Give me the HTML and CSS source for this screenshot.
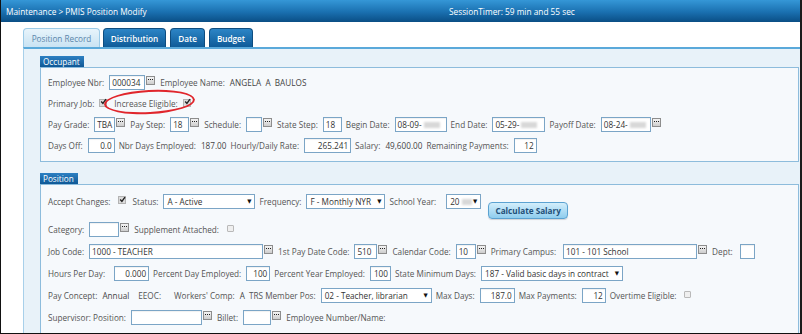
FILE: index.html
```html
<!DOCTYPE html>
<html>
<head>
<meta charset="utf-8">
<link rel="stylesheet" href="styles.css">
</head>
<body>
<div class="frame">
  <header class="topbar">
    <span class="crumb">Maintenance &gt; PMIS Position Modify</span>
    <span class="timer">SessionTimer: 59 min and 55 sec</span>
  </header>
  <nav class="tabs">
    <span class="tab active t1">Position Record</span>
    <span class="tab t2">Distribution</span>
    <span class="tab t3">Date</span>
    <span class="tab t4">Budget</span>
  </nav>
  <main class="panel">
    <section class="group">
      <div class="group-title">Occupant</div>
      <div class="group-box occ">
        <div class="row">
          <span class="lbl">Employee Nbr:</span>
          <span class="field"><span class="inp w36">000034</span><span class="dots"><svg width="7" height="7" viewBox="0 0 7 7"><rect x="1" y="2" width="1" height="1" fill="#222"/><rect x="3" y="2" width="1" height="1" fill="#222"/><rect x="5" y="2" width="1" height="1" fill="#222"/></svg></span></span>
          <span class="lbl">Employee Name:</span>
          <span class="val">ANGELA&nbsp; A&nbsp; BAULOS</span>
        </div>
        <div class="row ring-row">
          <span class="lbl">Primary Job:</span>
          <span class="chk on"><svg width="7" height="7" viewBox="0 0 7 7"><path d="M1.2 3.6 L2.9 5.4 L6 1.2" fill="none" stroke="#222" stroke-width="1.4"/></svg></span>
          <span class="lbl ml3">Increase Eligible:</span>
          <span class="chk on"><svg width="7" height="7" viewBox="0 0 7 7"><path d="M1.2 3.6 L2.9 5.4 L6 1.2" fill="none" stroke="#222" stroke-width="1.4"/></svg></span>
          <span class="ring"></span>
        </div>
        <div class="row">
          <span class="lbl">Pay Grade:</span>
          <span class="field"><span class="inp w21">TBA</span><span class="dots"><svg width="7" height="7" viewBox="0 0 7 7"><rect x="1" y="2" width="1" height="1" fill="#222"/><rect x="3" y="2" width="1" height="1" fill="#222"/><rect x="5" y="2" width="1" height="1" fill="#222"/></svg></span></span>
          <span class="lbl">Pay Step:</span>
          <span class="field"><span class="inp w19">18</span><span class="dots"><svg width="7" height="7" viewBox="0 0 7 7"><rect x="1" y="2" width="1" height="1" fill="#222"/><rect x="3" y="2" width="1" height="1" fill="#222"/><rect x="5" y="2" width="1" height="1" fill="#222"/></svg></span></span>
          <span class="lbl">Schedule:</span>
          <span class="field"><span class="inp w16"></span><span class="dots"><svg width="7" height="7" viewBox="0 0 7 7"><rect x="1" y="2" width="1" height="1" fill="#222"/><rect x="3" y="2" width="1" height="1" fill="#222"/><rect x="5" y="2" width="1" height="1" fill="#222"/></svg></span></span>
          <span class="lbl">State Step:</span>
          <span class="inp w19">18</span>
          <span class="lbl">Begin Date:</span>
          <span class="inp w52">08-09-<span class="blur"></span></span>
          <span class="lbl">End Date:</span>
          <span class="inp w53">05-29-<span class="blur"></span></span>
          <span class="lbl">Payoff Date:</span>
          <span class="field"><span class="inp w50">08-24-<span class="blur"></span></span><span class="dots"><svg width="7" height="7" viewBox="0 0 7 7"><rect x="1" y="2" width="1" height="1" fill="#222"/><rect x="3" y="2" width="1" height="1" fill="#222"/><rect x="5" y="2" width="1" height="1" fill="#222"/></svg></span></span>
        </div>
        <div class="row">
          <span class="lbl">Days Off:</span>
          <span class="inp w27 num">0.0</span>
          <span class="lbl">Nbr Days Employed:</span>
          <span class="val">187.00</span>
          <span class="lbl">Hourly/Daily Rate:</span>
          <span class="inp w47 num">265.241</span>
          <span class="lbl">Salary:</span>
          <span class="val">49,600.00</span>
          <span class="lbl">Remaining Payments:</span>
          <span class="inp w23 num">12</span>
        </div>
      </div>
    </section>

    <section class="group pos-group">
      <div class="group-title">Position</div>
      <div class="group-box pos">
        <div class="row">
          <span class="lbl">Accept Changes:</span>
          <span class="chk on ml2"><svg width="7" height="7" viewBox="0 0 7 7"><path d="M1.2 3.6 L2.9 5.4 L6 1.2" fill="none" stroke="#222" stroke-width="1.4"/></svg></span>
          <span class="lbl ml3">Status:</span>
          <span class="sel w92"><span>A - Active</span><span class="arr">▼</span></span>
          <span class="lbl">Frequency:</span>
          <span class="sel w79"><span>F - Monthly NYR</span><span class="arr">▼</span></span>
          <span class="lbl">School Year:</span>
          <span class="sel w35 ml5"><span>20<span class="blur short"></span></span><span class="arr">▼</span></span>
          <span class="calc">Calculate Salary</span>
        </div>
        <div class="row r2">
          <span class="lbl">Category:</span>
          <span class="field"><span class="inp w30"></span><span class="dots"><svg width="7" height="7" viewBox="0 0 7 7"><rect x="1" y="2" width="1" height="1" fill="#222"/><rect x="3" y="2" width="1" height="1" fill="#222"/><rect x="5" y="2" width="1" height="1" fill="#222"/></svg></span></span>
          <span class="lbl">Supplement Attached:</span>
          <span class="chk off ml3"></span>
        </div>
        <div class="row">
          <span class="lbl">Job Code:</span>
          <span class="field"><span class="inp w174">1000 - TEACHER</span><span class="dots"><svg width="7" height="7" viewBox="0 0 7 7"><rect x="1" y="2" width="1" height="1" fill="#222"/><rect x="3" y="2" width="1" height="1" fill="#222"/><rect x="5" y="2" width="1" height="1" fill="#222"/></svg></span></span>
          <span class="lbl">1st Pay Date Code:</span>
          <span class="field"><span class="inp w23">510</span><span class="dots"><svg width="7" height="7" viewBox="0 0 7 7"><rect x="1" y="2" width="1" height="1" fill="#222"/><rect x="3" y="2" width="1" height="1" fill="#222"/><rect x="5" y="2" width="1" height="1" fill="#222"/></svg></span></span>
          <span class="lbl">Calendar Code:</span>
          <span class="field"><span class="inp w20">10</span><span class="dots"><svg width="7" height="7" viewBox="0 0 7 7"><rect x="1" y="2" width="1" height="1" fill="#222"/><rect x="3" y="2" width="1" height="1" fill="#222"/><rect x="5" y="2" width="1" height="1" fill="#222"/></svg></span></span>
          <span class="lbl">Primary Campus:</span>
          <span class="field ml2"><span class="inp w134">101 - 101 School</span><span class="dots"><svg width="7" height="7" viewBox="0 0 7 7"><rect x="1" y="2" width="1" height="1" fill="#222"/><rect x="3" y="2" width="1" height="1" fill="#222"/><rect x="5" y="2" width="1" height="1" fill="#222"/></svg></span></span>
          <span class="lbl">Dept:</span>
          <span class="inp w15 ml2"></span>
        </div>
        <div class="row">
          <span class="lbl">Hours Per Day:</span>
          <span class="inp w35 num ml4">0.000</span>
          <span class="lbl">Percent Day Employed:</span>
          <span class="inp w24 num">100</span>
          <span class="lbl">Percent Year Employed:</span>
          <span class="inp w21 num">100</span>
          <span class="lbl">State Minimum Days:</span>
          <span class="sel w142"><span>187 - Valid basic days in contract</span><span class="arr">▼</span></span>
        </div>
        <div class="row">
          <span class="lbl">Pay Concept:</span>
          <span class="val">Annual</span>
          <span class="lbl ml5">EEOC:</span>
          <span class="lbl ml8">Workers' Comp:</span>
          <span class="val">A</span>
          <span class="lbl">TRS Member Pos:</span>
          <span class="sel w111"><span>02 - Teacher, librarian</span><span class="arr">▼</span></span>
          <span class="lbl">Max Days:</span>
          <span class="inp w35 num">187.0</span>
          <span class="lbl">Max Payments:</span>
          <span class="inp w24 num">12</span>
          <span class="lbl">Overtime Eligible:</span>
          <span class="chk off ml3"></span>
        </div>
        <div class="row">
          <span class="lbl">Supervisor: Position:</span>
          <span class="field"><span class="inp w71"></span><span class="dots"><svg width="7" height="7" viewBox="0 0 7 7"><rect x="1" y="2" width="1" height="1" fill="#222"/><rect x="3" y="2" width="1" height="1" fill="#222"/><rect x="5" y="2" width="1" height="1" fill="#222"/></svg></span></span>
          <span class="lbl">Billet:</span>
          <span class="field"><span class="inp w28"></span><span class="dots"><svg width="7" height="7" viewBox="0 0 7 7"><rect x="1" y="2" width="1" height="1" fill="#222"/><rect x="3" y="2" width="1" height="1" fill="#222"/><rect x="5" y="2" width="1" height="1" fill="#222"/></svg></span></span>
          <span class="lbl">Employee Number/Name:</span>
        </div>
      </div>
    </section>
  </main>
</div>
</body>
</html>
```

FILE: styles.css
```css
* { box-sizing: border-box; }
html, body { margin: 0; padding: 0; background: #fff; }
body {
  font-family: "Open Sans", "DejaVu Sans", sans-serif;
  font-size: 8.2px;
  color: #555;
}
.frame {
  width: 802px;
  height: 334px;
  overflow: hidden;
  border-left: 1px solid #111;
  border-right: 2px solid #1a1a1a;
  border-bottom: 1px solid #111;
  background: #fff;
  display: flex;
  flex-direction: column;
}
.topbar {
  height: 22px;
  flex: none;
  display: grid;
  grid-template-columns: 443px 1fr;
  align-items: center;
  padding-left: 5px;
  color: #fff;
  background: linear-gradient(#3597d7, #1a70b0 55%, #0a4e85);
  font-size: 8.3px;
}
.tabs {
  height: 25px;
  flex: none;
  display: flex;
  align-items: flex-end;
  gap: 3px;
  padding-left: 22px;
}
.tab {
  height: 19px;
  display: flex;
  align-items: center;
  justify-content: center;
  border-radius: 4px 4px 0 0;
  color: #fff;
  font-weight: 600;
  background: linear-gradient(#2c85c6, #0f5b98);
  border: 1px solid #0e4d80;
  border-bottom: none;
}
.tab.active {
  font-weight: 400;
  color: #5b85aa;
  background: linear-gradient(#e8f4fb, #c9e3f3);
  border-color: #9ccbe8;
}
.t1 { width: 77px; }
.t2 { width: 63px; }
.t3 { width: 35px; margin-left: 1px; }
.t4 { width: 44px; margin-left: 1px; }
.panel {
  flex: 1;
  margin-left: 22px;
  border-top: 2px solid #5aa9da;
  border-left: 1px solid #a8d0ea;
  background: #e8f2f9;
  padding: 7px 0 0 16px;
}
.group-title {
  display: inline-block;
  height: 11px;
  line-height: 11px;
  padding: 0 4px 0 3px;
  color: #fff;
  background: linear-gradient(#2d80c2, #0f5896);
  vertical-align: top;
}
.group-box {
  border: 1px solid #8dbcdc;
  background: #f6f9fc;
  margin-right: 1px;
  padding: 4px 0 5px 7px;
}
.pos-group { margin-top: 11px; }
.pos { padding-top: 5px; padding-bottom: 20px; }
.row {
  display: flex;
  align-items: center;
  height: 21px;
  white-space: nowrap;
}
.pos .row { height: 22px; }
.pos .row.r2 { margin-top: 6px; }
.lbl { color: #555; margin-right: 5px; }
.val { color: #444; margin-right: 4px; }
.inp {
  display: inline-flex;
  align-items: center;
  height: 15px;
  border: 1px solid #7ba5c6;
  background: #fff;
  padding: 0 2px;
  color: #333;
  margin-right: 4px;
  box-shadow: inset 0 1px 1px rgba(0,0,0,0.06);
}
.inp.num { justify-content: flex-end; }
.field { display: inline-flex; align-items: flex-start; gap: 1px; margin-right: 5px; }
.field .inp { margin-right: 0; }
.dots {
  width: 9px;
  height: 9px;
  border: 1px solid #8d8d8d;
  background: linear-gradient(#f4f4f4, #cdcdcd);
  margin-top: 1px;
  display: flex;
}
.dots svg { display: block; }
.blur {
  display: inline-block;
  width: 16px;
  height: 6px;
  background: #d8d8d8;
  filter: blur(1.2px);
  margin-left: 2px;
}
.blur.short { width: 10px; }
.chk {
  width: 8px;
  height: 8px;
  display: inline-flex;
  align-items: center;
  justify-content: center;
  margin-right: 4px;
  margin-bottom: 2px;
}
.chk.on { background: #dcdcdc; border: 1px solid #b3b3b3; }
.chk.on svg { display: block; margin-top: -2px; margin-left: 1px; overflow: visible; }
.chk.off { width: 7px; height: 7px; background: #efefef; border: 1px solid #b9b9b9; border-radius: 1px; }
.sel {
  display: inline-flex;
  align-items: center;
  justify-content: space-between;
  height: 15px;
  border: 1px solid #7ba5c6;
  background: #fff;
  color: #333;
  padding: 0 3px 0 3px;
  margin-right: 4px;
}
.arr { font-size: 5.5px; color: #111; }
.calc {
  align-self: flex-start;
  margin-top: 12px;
  margin-left: 3px;
  width: 80px;
  height: 17px;
  display: flex;
  align-items: center;
  justify-content: center;
  border: 1px solid #5ba2d1;
  border-radius: 4px;
  background: linear-gradient(#d3eefb, #8fcdee);
  color: #1f4f78;
  font-weight: 700;
  box-shadow: 0 1px 1px rgba(0,0,0,0.15);
}
.ring-row { position: relative; }
.ring {
  position: absolute;
  left: 56px;
  top: -3px;
  width: 91px;
  height: 24px;
  border: 2.5px solid #e0262c;
  border-radius: 50%;
  transform: rotate(-3deg);
}
.ml2 { margin-left: 2px; }
.ml3 { margin-left: 3px; }
.ml4 { margin-left: 4px; }
.ml5 { margin-left: 5px; }
.ml8 { margin-left: 8px; }
.w15 { width: 15px; } .w16 { width: 16px; } .w19 { width: 19px; } .w20 { width: 20px; }
.w21 { width: 21px; } .w23 { width: 23px; } .w24 { width: 24px; } .w27 { width: 27px; }
.w28 { width: 28px; } .w30 { width: 30px; } .w35 { width: 35px; } .w36 { width: 36px; }
.w47 { width: 47px; } .w50 { width: 50px; } .w52 { width: 52px; } .w53 { width: 53px; }
.w71 { width: 71px; } .w79 { width: 79px; } .w92 { width: 92px; } .w111 { width: 111px; }
.w134 { width: 134px; } .w142 { width: 142px; } .w174 { width: 174px; }
```
